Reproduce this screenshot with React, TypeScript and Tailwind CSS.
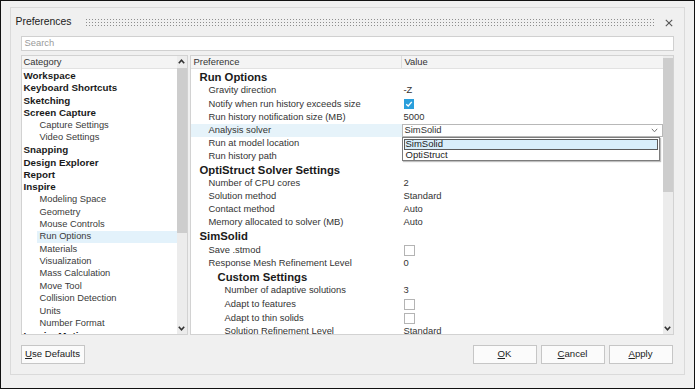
import React from "react";

type Cat = { t: string; child?: boolean; sel?: boolean };
const cats: Cat[] = [
  { t: "Workspace" },
  { t: "Keyboard Shortcuts" },
  { t: "Sketching" },
  { t: "Screen Capture" },
  { t: "Capture Settings", child: true },
  { t: "Video Settings", child: true },
  { t: "Snapping" },
  { t: "Design Explorer" },
  { t: "Report" },
  { t: "Inspire" },
  { t: "Modeling Space", child: true },
  { t: "Geometry", child: true },
  { t: "Mouse Controls", child: true },
  { t: "Run Options", child: true, sel: true },
  { t: "Materials", child: true },
  { t: "Visualization", child: true },
  { t: "Mass Calculation", child: true },
  { t: "Move Tool", child: true },
  { t: "Collision Detection", child: true },
  { t: "Units", child: true },
  { t: "Number Format", child: true },
  { t: "Inspire Motion" },
];

type Row =
  | { k: "h"; t: string; lvl: 1 | 2 }
  | { k: "r"; t: string; lvl: 1 | 2; v?: string; cb?: "on" | "off"; combo?: boolean; hl?: boolean };

const rows: Row[] = [
  { k: "h", t: "Run Options", lvl: 1 },
  { k: "r", t: "Gravity direction", lvl: 1, v: "-Z" },
  { k: "r", t: "Notify when run history exceeds size", lvl: 1, cb: "on" },
  { k: "r", t: "Run history notification size (MB)", lvl: 1, v: "5000" },
  { k: "r", t: "Analysis solver", lvl: 1, combo: true, hl: true },
  { k: "r", t: "Run at model location", lvl: 1 },
  { k: "r", t: "Run history path", lvl: 1 },
  { k: "h", t: "OptiStruct Solver Settings", lvl: 1 },
  { k: "r", t: "Number of CPU cores", lvl: 1, v: "2" },
  { k: "r", t: "Solution method", lvl: 1, v: "Standard" },
  { k: "r", t: "Contact method", lvl: 1, v: "Auto" },
  { k: "r", t: "Memory allocated to solver (MB)", lvl: 1, v: "Auto" },
  { k: "h", t: "SimSolid", lvl: 1 },
  { k: "r", t: "Save .stmod", lvl: 1, cb: "off" },
  { k: "r", t: "Response Mesh Refinement Level", lvl: 1, v: "0" },
  { k: "h", t: "Custom Settings", lvl: 2 },
  { k: "r", t: "Number of adaptive solutions", lvl: 2, v: "3" },
  { k: "r", t: "Adapt to features", lvl: 2, cb: "off" },
  { k: "r", t: "Adapt to thin solids", lvl: 2, cb: "off" },
  { k: "r", t: "Solution Refinement Level", lvl: 2, v: "Standard" },
];

function UpArrow() {
  return (
    <svg width="7" height="5" viewBox="0 0 7 5">
      <path d="M0.8 4.2 L3.5 1.2 L6.2 4.2" fill="none" stroke="#333" strokeWidth="1.6" />
    </svg>
  );
}
function DownArrow() {
  return (
    <svg width="7" height="5" viewBox="0 0 7 5">
      <path d="M0.8 0.8 L3.5 3.8 L6.2 0.8" fill="none" stroke="#333" strokeWidth="1.6" />
    </svg>
  );
}

function Scrollbar({ thumbTop, thumbH }: { thumbTop: number; thumbH: number }) {
  return (
    <div className="w-[10px] h-full bg-[#ececec] flex flex-col items-center relative">
      <div className="h-[11px] flex items-center justify-center">
        <UpArrow />
      </div>
      <div
        className="absolute left-0 w-[10px] bg-[#cdcdcd]"
        style={{ top: thumbTop, height: thumbH }}
      />
      <div className="mt-auto h-[11px] flex items-center justify-center">
        <DownArrow />
      </div>
    </div>
  );
}

function Check({ on }: { on: boolean }) {
  if (on)
    return (
      <div className="w-[10px] h-[10px] bg-[#2a9fdc] flex items-center justify-center">
        <svg width="8" height="8" viewBox="0 0 8 8">
          <path d="M1.2 4.2 L3.2 6 L6.8 1.8" fill="none" stroke="#fff" strokeWidth="1.3" />
        </svg>
      </div>
    );
  return <div className="w-[11px] h-[11px] bg-white border border-[#b4b4b4]" />;
}

function Btn({ u, rest, w }: { u: string; rest: string; w: string }) {
  return (
    <div
      className={`${w} h-[19px] bg-[#fbfbfb] border border-[#c6c6c6] flex items-center justify-center text-[9.6px] text-[#222]`}
    >
      <span>
        <span className="underline underline-offset-[1px]">{u}</span>
        {rest}
      </span>
    </div>
  );
}

export default function App() {
  return (
    <div className="w-[696px] h-[390px] bg-white font-['Liberation_Sans',Arial,sans-serif]">
      <div className="w-[695px] h-[389px] border-[1.5px] border-[#111] bg-[#f0f0f0] pt-[6px] pl-[8.5px]">
        <div className="w-[675px] h-[368px] border border-[#dadada] bg-[#f0f0f0] flex flex-col">
          {/* title */}
          <div className="h-[28px] flex items-center pl-[5px] pr-[10px] pt-[1px]">
            <span className="text-[10.4px] text-[#222] leading-none">Preferences</span>
            <div className="ml-[13px] flex-1 h-[9px] bg-[radial-gradient(circle,#8e8e8e_0.6px,transparent_0.9px)] bg-[length:3px_3px]" />
            <div className="ml-[10px] w-[9px] h-[9px] flex items-center justify-center">
              <svg width="8" height="8" viewBox="0 0 8 8">
                <path d="M0.8 0.8 L7.2 7.2 M7.2 0.8 L0.8 7.2" stroke="#555" strokeWidth="1.1" />
              </svg>
            </div>
          </div>
          {/* search */}
          <div className="mx-[10px] h-[15px] bg-white border border-[#d0d0d0] flex items-center pl-[3px] text-[9.4px] text-[#9a9a9a]">
            Search
          </div>
          {/* panels */}
          <div className="mt-[4px] mx-[10px] h-[280px] flex gap-[2px]">
            {/* category */}
            <div className="w-[167px] h-full border border-[#d2d2d2] bg-white flex">
              <div className="flex-1 flex flex-col overflow-hidden">
                <div className="h-[13px] shrink-0 bg-[#f4f4f4] border-b border-[#e2e2e2] flex items-center pl-[2px] text-[9.4px] text-[#333]">
                  Category
                </div>
                <div className="flex flex-col pt-[1px]">
                  {cats.map((c, i) => (
                    <div
                      key={i}
                      className={`h-[12.4px] shrink-0 flex items-center ${
                        c.child ? "pl-[15px]" : "pl-[2px]"
                      }`}
                    >
                      <div
                        className={`h-full flex-1 flex items-center ${
                          c.sel ? "bg-[#e3f2fb]" : ""
                        } ${c.child ? "pl-[3px] text-[9.3px] text-[#3a3a3a]" : "font-bold text-[9.8px] text-[#1a1a1a]"}`}
                      >
                        {c.t}
                      </div>
                    </div>
                  ))}
                </div>
              </div>
              <Scrollbar thumbTop={12} thumbH={165} />
            </div>
            {/* property grid */}
            <div className="flex-1 h-full border border-[#d2d2d2] bg-white flex relative">
              <div className="flex-1 flex flex-col overflow-hidden">
                <div className="h-[13px] shrink-0 bg-[#f4f4f4] border-b border-[#e2e2e2] flex text-[9.4px] text-[#333]">
                  <div className="w-[211px] border-r border-[#dcdcdc] flex items-center pl-[3px]">Preference</div>
                  <div className="flex-1 flex items-center pl-[3px]">Value</div>
                </div>
                <div className="flex flex-col pt-[1px]">
                  {rows.map((r, i) => {
                    if (r.k === "h")
                      return (
                        <div
                          key={i}
                          className={`h-[14px] shrink-0 flex items-center font-bold text-[11.3px] text-[#1a1a1a] ${
                            r.lvl === 1 ? "pl-[9px]" : "pl-[27px]"
                          }`}
                        >
                          {r.t}
                        </div>
                      );
                    const h = r.cb ? "h-[14px]" : "h-[13px]";
                    return (
                      <div key={i} className={`${h} shrink-0 flex text-[9.4px] text-[#333]`}>
                        <div
                          className={`w-[211px] flex items-center ${r.lvl === 1 ? "pl-[18px]" : "pl-[34px]"} ${
                            r.hl ? "bg-[#e6f3fa]" : ""
                          }`}
                        >
                          {r.t}
                        </div>
                        <div className="flex-1 flex items-center">
                          {r.combo ? (
                            <div className="w-full h-full bg-white border border-[#b8b8b8] flex items-center pl-[2px] pr-[4px]">
                              <span>SimSolid</span>
                              <span className="ml-auto">
                                <svg width="7" height="5" viewBox="0 0 7 5">
                                  <path d="M0.8 0.8 L3.5 3.8 L6.2 0.8" fill="none" stroke="#777" strokeWidth="1" />
                                </svg>
                              </span>
                            </div>
                          ) : r.cb ? (
                            <div className="pl-[2px]">
                              <Check on={r.cb === "on"} />
                            </div>
                          ) : (
                            <span className="pl-[2px]">{r.v}</span>
                          )}
                        </div>
                      </div>
                    );
                  })}
                </div>
              </div>
              <Scrollbar thumbTop={2} thumbH={134} />
              {/* dropdown list */}
              <div className="absolute left-[211px] top-[81px] w-[258px] h-[24px] bg-white border border-[#7c7c7c] shadow-[1px_1px_1px_rgba(0,0,0,0.25)] flex flex-col p-[1px] text-[9.5px] text-[#222]">
                <div className="h-[10.5px] bg-[#d8eefa] border border-[#5a5a5a] flex items-center pl-[1px]">SimSolid</div>
                <div className="h-[10.5px] flex items-center pl-[2px]">OptiStruct</div>
              </div>
            </div>
          </div>
          {/* buttons */}
          <div className="mt-[10px] mx-[10px] flex items-center">
            <Btn u="U" rest="se Defaults" w="w-[64px]" />
            <div className="ml-auto flex gap-[4px] mr-[1px]">
              <Btn u="O" rest="K" w="w-[64px]" />
              <Btn u="C" rest="ancel" w="w-[64px]" />
              <Btn u="A" rest="pply" w="w-[64px]" />
            </div>
          </div>
        </div>
      </div>
    </div>
  );
}
